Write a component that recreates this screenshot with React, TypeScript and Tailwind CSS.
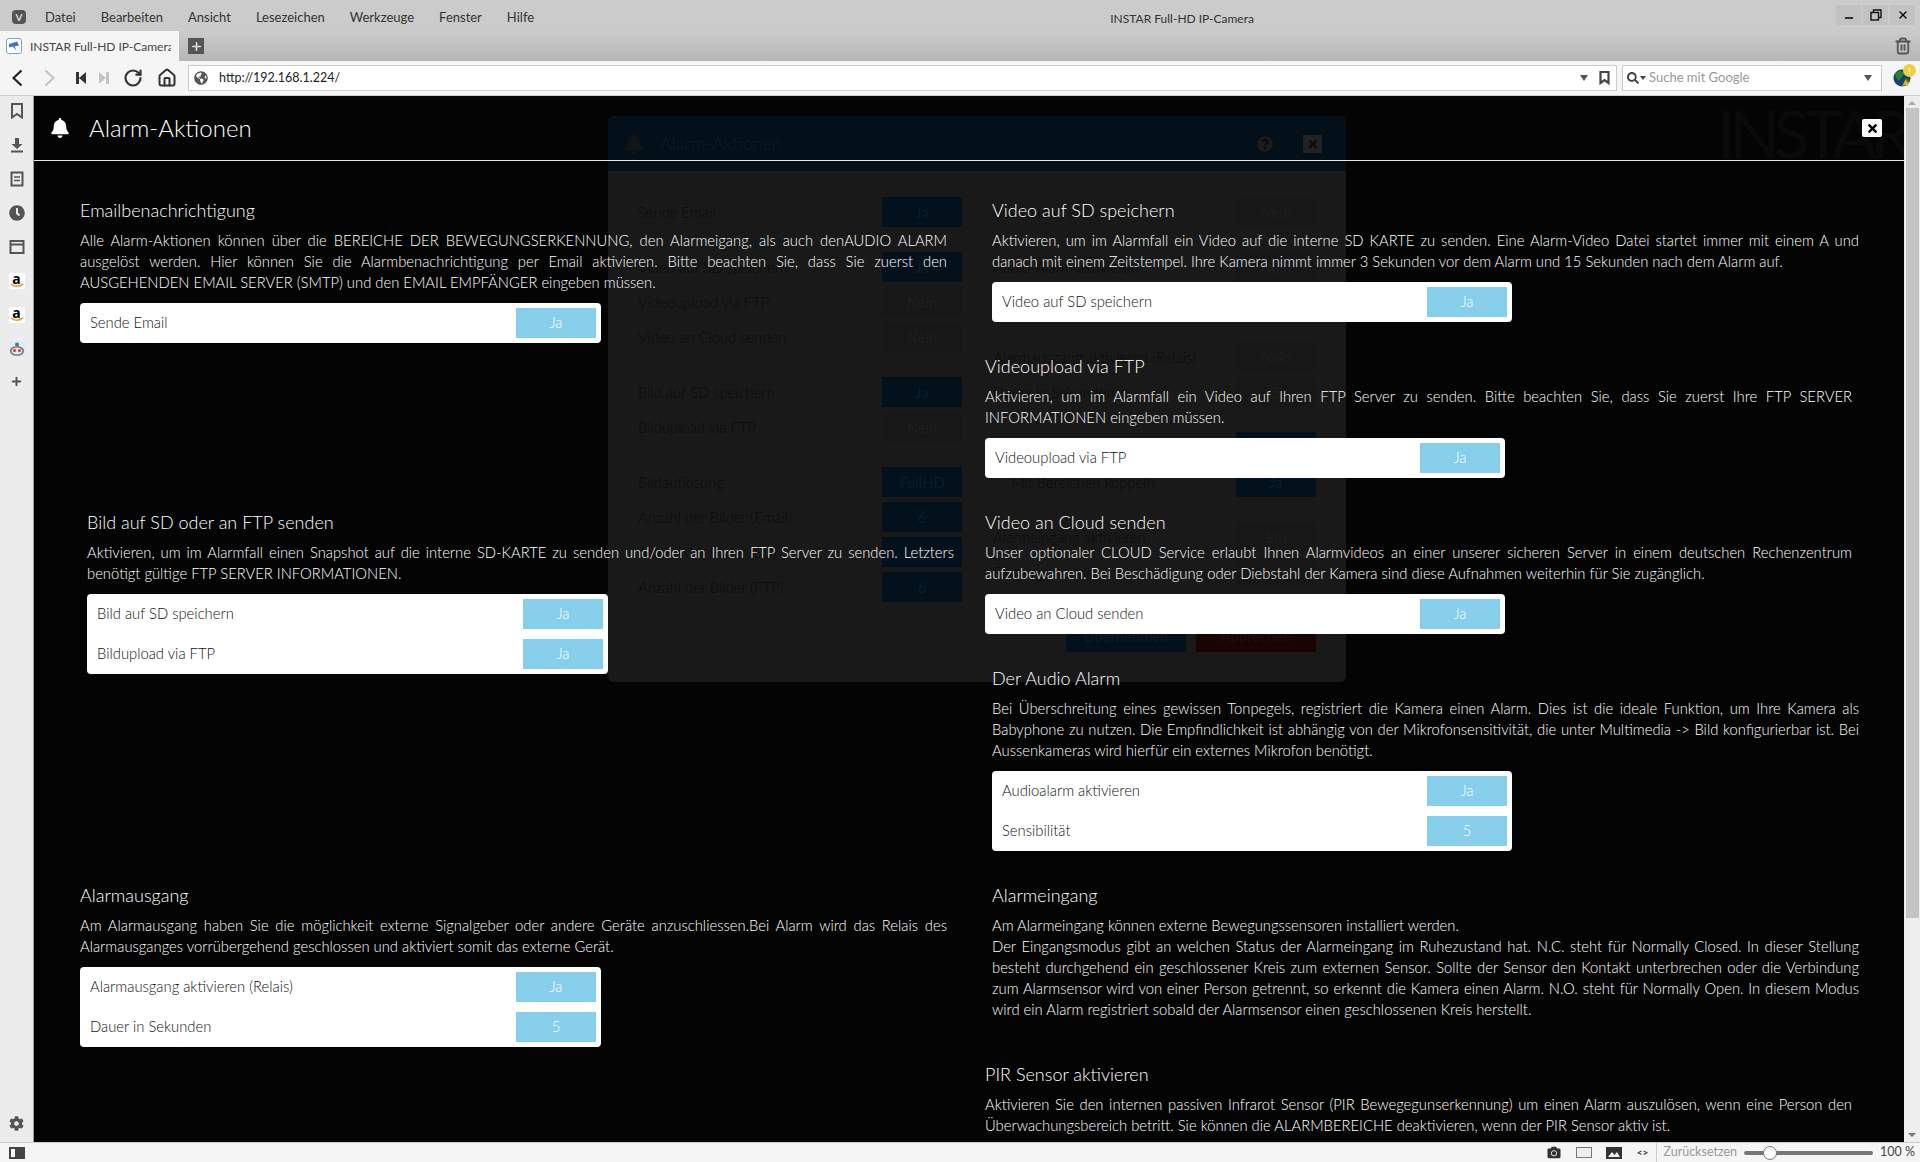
import React from "react";
import { Plus, RotateCw, Trash2, Minus, X, Home } from "lucide-react";
import { FaBell, FaCog, FaTimes, FaCamera, FaGlobeAmericas, FaSearch, FaQuestionCircle, FaClock } from "react-icons/fa";

const ui = { fontFamily: '"Lato","Noto Sans",sans-serif' };
const lato = { fontFamily: 'Lato,"Open Sans",sans-serif' };

function Row({ label, value }: { label: string; value: string }) {
  return (
    <div className="flex h-[30px] items-center justify-between">
      <span className="pb-[2px] pl-[3px] text-[14.8px] text-[#111]">{label}</span>
      <span className="flex h-[30px] w-[80px] items-center justify-center bg-[#87ceeb] pb-[1px] text-[14.8px] text-white">{value}</span>
    </div>
  );
}

function Section({ title, text, rows, ml, mt, right }: { title: string; text: React.ReactNode; rows?: [string, string][]; ml: string; mt: string; right?: boolean }) {
  return (
    <section className={`w-[867px] ${ml} ${mt}`}>
      <h3 className="h-[30px] text-[18px] leading-[30px] font-light text-white">{title}</h3>
      <p className="mt-[5px] text-justify text-[14.8px] leading-[21px] font-light text-white">{text}</p>
      {rows && (
        <div className={`mt-[10px] flex flex-col gap-[10px] rounded-[4px] bg-white py-[5px] pr-[5px] pl-[7px] font-light ${right ? "w-[520px]" : "w-[521px]"}`}>
          {rows.map(([a, b]) => (
            <Row key={a} label={a} value={b} />
          ))}
        </div>
      )}
    </section>
  );
}

function DimRow({ label, value, blue, indent }: { label: string; value: string; blue?: boolean; indent?: boolean }) {
  return (
    <div className="flex h-[30px] items-center justify-between">
      <span className={`text-[14.8px] font-light text-[#0b0b0b] ${indent ? "pl-[18px]" : ""}`}>{label}</span>
      <span className={`flex h-[30px] w-[80px] items-center justify-center text-[14.8px] ${blue ? "bg-[#03111c] text-[#0a1d2c]" : "bg-[#171717] text-[#1e1e1e]"}`}>{value}</span>
    </div>
  );
}

function DimModal() {
  return (
    <div className="absolute top-[20px] left-[574px] flex h-[566px] w-[738px] flex-col overflow-hidden rounded-[6px] bg-[#191919]">
      <div className="flex h-[55px] items-center bg-[#03101a] pr-[24px] pl-[16px]">
        <FaBell className="h-[20px] w-[20px] text-[#141414]" />
        <span className="ml-[16px] text-[18px] font-light text-[#0c1d2a]">Alarm-Aktionen</span>
        <FaQuestionCircle className="ml-auto h-[16px] w-[16px] text-[#1c1c1c]" />
        <span className="ml-[30px] flex h-[18px] w-[19px] items-center justify-center bg-[#222]"><FaTimes className="h-[12px] w-[12px] text-[#0b0b0b]" /></span>
      </div>
      <div className="flex gap-[31px] px-[30px] pt-[26px]">
        <div className="flex w-[324px] flex-col gap-[5px]">
          <DimRow label="Sende Email" value="Ja" blue />
          <div className="h-[15px]" />
          <DimRow label="Video auf SD speichern" value="Ja" blue />
          <DimRow label="Videoupload via FTP" value="Nein" />
          <DimRow label="Video an Cloud senden" value="Nein" />
          <div className="h-[15px]" />
          <DimRow label="Bild auf SD speichern" value="Ja" blue />
          <DimRow label="Bildupload via FTP" value="Nein" />
          <div className="h-[15px]" />
          <DimRow label="Bildauflösung" value="FullHD" blue />
          <DimRow label="Anzahl der Bilder (Email)" value="6" blue />
          <DimRow label="Anzahl der Bilder (SD)" value="6" blue />
          <DimRow label="Anzahl der Bilder (FTP)" value="6" blue />
        </div>
        <div className="flex w-[323px] flex-col gap-[5px]">
          <DimRow label="Audioalarm aktivieren" value="Nein" />
          <div className="h-[15px]" />
          <DimRow label="Audio-Alarm aktivieren" value="Nein" />
          <DimRow label="Sensibilität" value="5" />
          <div className="h-[15px]" />
          <DimRow label="Alarmausgang aktivieren (Relais)" value="Nein" />
          <DimRow label="Dauer in Sekunden" value="5" />
          <div className="h-[15px]" />
          <DimRow label="PIR Sensor aktivieren" value="Ja" blue />
          <DimRow label="Mit Bereichen koppeln" value="Ja" blue indent />
          <div className="h-[15px]" />
          <DimRow label="Alarmeingang aktivieren" value="Ein" />
          <DimRow label="Eingangsmodus" value="N.C." />
          <div className="mt-[28px] flex justify-end gap-[10px]">
            <span className="flex h-[32px] w-[120px] items-center justify-center bg-[#03111c] text-[14.8px] text-[#0a1d2c]">Übernehmen</span>
            <span className="flex h-[32px] w-[120px] items-center justify-center bg-[#190303] text-[14.8px] text-[#2a0a0a]">Abbrechen</span>
          </div>
        </div>
      </div>
    </div>
  );
}

function Chevron({ dir, color, className }: { dir: "l" | "r"; color: string; className: string }) {
  return (
    <svg className={className} width="12" height="18" viewBox="0 0 12 18" fill="none" stroke={color} strokeWidth="2.2">
      <path d={dir === "l" ? "M10.5 1.5L2.5 9l8 7.5" : "M1.5 1.5L9.5 9l-8 7.5"} />
    </svg>
  );
}

function Globe() {
  return (
    <div className="relative ml-[11px] h-[18px] w-[18px]">
      <svg width="18" height="18" viewBox="0 0 18 18">
        <circle cx="9" cy="9" r="8.5" fill="#17406a" />
        <path d="M3 4c3-3 7-2 8 0s-2 3-3 5-3 3-4 1-3-4-1-6zM12 10c2-1 4 0 4 2s-3 4-4 3-1-4 0-5z" fill="#2f7d3b" />
        <path d="M9 17l4-7 1 3 4 1-4 1 1 3-3-2z" fill="#e0b030" />
      </svg>
      <span className="absolute -top-[5px] -right-[5px] flex h-[13px] w-[13px] items-center justify-center rounded-full bg-[#f0d040] text-[8px] font-bold text-white">!</span>
    </div>
  );
}

function BrowserTop() {
  return (
    <header style={ui} className="h-[96px] shrink-0 text-[13px] text-[#333]">
      <div className="h-[61px] bg-gradient-to-b from-[#cbcbcb] from-50% to-[#b6b6b6]">
        <div className="flex h-[31px] items-center pt-[3px]">
          <span className="ml-[12px] flex h-[14px] w-[14px] items-center justify-center rounded-[4px] bg-[#555] text-[10px] font-bold text-[#ddd]">V</span>
          <nav className="ml-[19px] flex gap-[25px] pt-[2px]">
            {["Datei", "Bearbeiten", "Ansicht", "Lesezeichen", "Werkzeuge", "Fenster", "Hilfe"].map((m) => (
              <span key={m}>{m}</span>
            ))}
          </nav>
          <span className="ml-[528px] w-[240px] pt-[3px] text-center text-[12px]">INSTAR Full-HD IP-Camera</span>
          <div className="mt-[2px] ml-auto flex gap-[2px] self-start pr-[5px]">
            <span className="flex h-[20px] w-[25px] items-center justify-center bg-[#c2c2c2]"><Minus className="h-[12px] w-[12px] translate-y-[3px] text-black" strokeWidth={3} /></span>
            <span className="flex h-[20px] w-[25px] items-center justify-center bg-[#c2c2c2]">
              <svg width="12" height="12" viewBox="0 0 12 12" fill="none" stroke="#111" strokeWidth="1.4"><rect x="1" y="3.5" width="7.5" height="7.5" /><path d="M3.5 3V1H11V8.5H9" /></svg>
            </span>
            <span className="flex h-[20px] w-[25px] items-center justify-center bg-[#c2c2c2]"><X className="h-[12px] w-[12px] text-black" strokeWidth={2.6} /></span>
          </div>
        </div>
        <div className="flex h-[30px] items-stretch">
          <div className="flex w-[179px] items-center gap-[8px] bg-[#f5f5f5] pl-[6px] text-[12px] whitespace-nowrap">
            <span className="flex h-[16px] w-[16px] shrink-0 items-center justify-center rounded-[3px] border border-[#7aa0d8] bg-white">
              <svg width="12" height="12" viewBox="0 0 12 12"><path d="M1 4l8-2.5 2 4-4.5 1 2 4-4-4-3.5 1z" fill="#3a78c8" /></svg>
            </span>
            <span className="w-[141px] overflow-hidden pt-[2px] text-[#444]">INSTAR Full-HD IP-Camera</span>
          </div>
          <div className="ml-[9px] flex items-center">
            <span className="flex h-[16px] w-[16px] items-center justify-center bg-[#555]"><Plus className="h-[13px] w-[13px] text-[#ddd]" strokeWidth={3} /></span>
          </div>
          <div className="ml-auto flex items-center pr-[8px]"><Trash2 className="h-[18px] w-[18px] text-[#555]" strokeWidth={2.4} /></div>
        </div>
      </div>
      <div className="flex h-[35px] items-center border-b border-[#ccc] bg-[#f5f5f5]">
        <Chevron dir="l" color="#222" className="ml-[11px]" />
        <Chevron dir="r" color="#c4c4c4" className="ml-[21px]" />
        <svg className="ml-[19px]" width="12" height="12" viewBox="0 0 12 12" fill="#333"><rect x="1" y="0" width="3" height="12" /><path d="M11 0v12L4 6z" /></svg>
        <svg className="ml-[11px]" width="12" height="12" viewBox="0 0 12 12" fill="#c4c4c4"><rect x="8" y="0" width="3" height="12" /><path d="M1 0v12l7-6z" /></svg>
        <RotateCw className="ml-[13px] h-[20px] w-[20px] text-[#333]" strokeWidth={2.6} />
        <Home className="ml-[14px] h-[20px] w-[20px] text-[#333]" strokeWidth={2.4} />
        <div className="ml-[11px] flex h-[26px] w-[1429px] items-center border border-[#ccc] bg-white pr-[6px] pl-[5px]">
          <FaGlobeAmericas className="h-[14px] w-[14px] text-[#555]" />
          <span className="ml-[11px] text-[12.5px] text-[#222]">http://192.168.1.224/</span>
          <span className="ml-auto h-0 w-0 border-x-[4px] border-t-[6px] border-x-transparent border-t-[#555]" />
          <svg className="ml-[11px]" width="11" height="14" viewBox="0 0 11 14" fill="none" stroke="#444" strokeWidth="2.2"><path d="M1.5 1h8v11L5.5 9l-4 3z" /></svg>
        </div>
        <div className="ml-[5px] flex h-[26px] w-[260px] items-center border border-[#ccc] bg-white pr-[9px] pl-[4px]">
          <FaSearch className="h-[12px] w-[12px] text-[#444]" />
          <span className="ml-[1px] h-0 w-0 border-x-[3px] border-t-[4px] border-x-transparent border-t-[#444]" />
          <span className="ml-[3px] text-[13px] text-[#999]">Suche mit Google</span>
          <span className="ml-auto h-0 w-0 border-x-[4px] border-t-[6px] border-x-transparent border-t-[#555]" />
        </div>
        <Globe />
      </div>
    </header>
  );
}

function AmazonIcon() {
  return (
    <span className="relative flex h-[16px] w-[16px] justify-center rounded-[2px] bg-white text-[14px] leading-[12px] font-bold text-black">
      a
      <svg className="absolute bottom-[0px] left-[1px]" width="14" height="6" viewBox="0 0 14 6" fill="none" stroke="#f09a1c" strokeWidth="1.6"><path d="M1 1c3 3 8 3 12 0" /></svg>
    </span>
  );
}

function RedditIcon() {
  return (
    <svg width="16" height="16" viewBox="0 0 16 16">
      <rect width="16" height="16" fill="#dcebf7" />
      <ellipse cx="8" cy="10" rx="7" ry="4.8" fill="#6b6b6b" />
      <circle cx="8" cy="3.5" r="2" fill="#6b6b6b" />
      <ellipse cx="8" cy="10" rx="5.5" ry="3.6" fill="#e6e6e6" />
      <circle cx="5.5" cy="9.5" r="1.5" fill="#e03030" />
      <circle cx="10.5" cy="9.5" r="1.5" fill="#e03030" />
    </svg>
  );
}

function Sidebar() {
  return (
    <aside className="flex w-[34px] shrink-0 flex-col items-center border-r border-[#999] bg-[#ececec] pt-[7px]">
      <div className="flex flex-col items-center gap-[18px]">
        <svg width="16" height="16" viewBox="0 0 16 16" fill="none" stroke="#555" strokeWidth="2"><path d="M3 1h10v13.5L8 11l-5 3.5z" /></svg>
        <svg width="16" height="16" viewBox="0 0 16 16" fill="#555"><path d="M6 1h4v6h3.5L8 12 2.5 7H6z" /><rect x="2" y="13.5" width="12" height="2" /></svg>
        <svg width="16" height="16" viewBox="0 0 16 16" fill="none" stroke="#555" strokeWidth="2"><rect x="2.5" y="1.5" width="11" height="13" /><path d="M5 6h6M5 9.5h6" strokeWidth="1.6" /></svg>
        <FaClock className="h-[16px] w-[16px] text-[#555]" />
        <svg width="16" height="16" viewBox="0 0 16 16" fill="none" stroke="#555" strokeWidth="2"><rect x="1.5" y="2" width="13" height="12" /><path d="M1.5 5.5h13" /></svg>
        <AmazonIcon />
        <AmazonIcon />
        <RedditIcon />
        <Plus className="h-[13px] w-[13px] text-[#555]" strokeWidth={3.5} />
      </div>
      <FaCog className="mt-auto mb-[11px] h-[15px] w-[15px] text-[#555]" />
    </aside>
  );
}

function Scrollbar() {
  return (
    <div className="flex w-[16px] shrink-0 flex-col items-center bg-[#eeeeee]">
      <span className="mt-[5px] h-0 w-0 border-x-[4px] border-b-[4px] border-x-transparent border-b-[#aaa]" />
      <div className="mt-[3px] h-[810px] w-[13px] bg-[#c4c4c4]" />
      <span className="mt-auto mb-[5px] h-0 w-0 border-x-[4px] border-t-[4px] border-x-transparent border-t-[#777]" />
    </div>
  );
}

function Overlay() {
  return (
    <div style={lato} className="relative min-w-0 flex-1 overflow-hidden bg-[#040404]">
      <span className="absolute top-[4px] right-[-2px] text-[66px] leading-none font-normal tracking-[-6px] text-[#0a0a0a]">INSTAR</span>
      <DimModal />
      <div className="relative z-10 h-full">
        <div className="flex h-[65px] items-center border-b border-[#e6e6e6] pr-[22px]">
          <FaBell className="ml-[16px] h-[20px] w-[20px] text-white" />
          <h2 className="ml-[19px] text-[24px] font-light text-white">Alarm-Aktionen</h2>
          <span className="ml-auto flex h-[18px] w-[20px] items-center justify-center rounded-[2px] bg-white"><FaTimes className="h-[13px] w-[13px] text-black" /></span>
        </div>
        <div className="flex">
          <div className="flex w-[924px] shrink-0 flex-col">
            <Section
              ml="ml-[46px]"
              mt="mt-[34px]"
              title="Emailbenachrichtigung"
              text="Alle Alarm-Aktionen können über die BEREICHE DER BEWEGUNGSERKENNUNG, den Alarmeigang, als auch denAUDIO ALARM ausgelöst werden. Hier können Sie die Alarmbenachrichtigung per Email aktivieren. Bitte beachten Sie, dass Sie zuerst den AUSGEHENDEN EMAIL SERVER (SMTP) und den EMAIL EMPFÄNGER eingeben müssen."
              rows={[["Sende Email", "Ja"]]}
            />
            <Section
              ml="ml-[53px]"
              mt="mt-[164px]"
              title="Bild auf SD oder an FTP senden"
              text="Aktivieren, um im Alarmfall einen Snapshot auf die interne SD-KARTE zu senden und/oder an Ihren FTP Server zu senden. Letzters benötigt gültige FTP SERVER INFORMATIONEN."
              rows={[["Bild auf SD speichern", "Ja"], ["Bildupload via FTP", "Ja"]]}
            />
            <Section
              ml="ml-[46px]"
              mt="mt-[206px]"
              title="Alarmausgang"
              text="Am Alarmausgang haben Sie die möglichkeit externe Signalgeber oder andere Geräte anzuschliessen.Bei Alarm wird das Relais des Alarmausganges vorrübergehend geschlossen und aktiviert somit das externe Gerät."
              rows={[["Alarmausgang aktivieren (Relais)", "Ja"], ["Dauer in Sekunden", "5"]]}
            />
          </div>
          <div className="flex min-w-0 flex-1 flex-col">
            <Section
              right
              ml="ml-[34px]"
              mt="mt-[34px]"
              title="Video auf SD speichern"
              text="Aktivieren, um im Alarmfall ein Video auf die interne SD KARTE zu senden. Eine Alarm-Video Datei startet immer mit einem A und danach mit einem Zeitstempel. Ihre Kamera nimmt immer 3 Sekunden vor dem Alarm und 15 Sekunden nach dem Alarm auf."
              rows={[["Video auf SD speichern", "Ja"]]}
            />
            <Section
              right
              ml="ml-[27px]"
              mt="mt-[29px]"
              title="Videoupload via FTP"
              text="Aktivieren, um im Alarmfall ein Video auf Ihren FTP Server zu senden. Bitte beachten Sie, dass Sie zuerst Ihre FTP SERVER INFORMATIONEN eingeben müssen."
              rows={[["Videoupload via FTP", "Ja"]]}
            />
            <Section
              right
              ml="ml-[27px]"
              mt="mt-[29px]"
              title="Video an Cloud senden"
              text="Unser optionaler CLOUD Service erlaubt Ihnen Alarmvideos an einer unserer sicheren Server in einem deutschen Rechenzentrum aufzubewahren. Bei Beschädigung oder Diebstahl der Kamera sind diese Aufnahmen weiterhin für Sie zugänglich."
              rows={[["Video an Cloud senden", "Ja"]]}
            />
            <Section
              right
              ml="ml-[34px]"
              mt="mt-[29px]"
              title="Der Audio Alarm"
              text="Bei Überschreitung eines gewissen Tonpegels, registriert die Kamera einen Alarm. Dies ist die ideale Funktion, um Ihre Kamera als Babyphone zu nutzen. Die Empfindlichkeit ist abhängig von der Mikrofonsensitivität, die unter Multimedia -> Bild konfigurierbar ist. Bei Aussenkameras wird hierfür ein externes Mikrofon benötigt."
              rows={[["Audioalarm aktivieren", "Ja"], ["Sensibilität", "5"]]}
            />
            <Section
              ml="ml-[34px]"
              mt="mt-[29px]"
              title="Alarmeingang"
              text={<>Am Alarmeingang können externe Bewegungssensoren installiert werden.<br />Der Eingangsmodus gibt an welchen Status der Alarmeingang im Ruhezustand hat. N.C. steht für Normally Closed. In dieser Stellung besteht durchgehend ein geschlossener Kreis zum externen Sensor. Sollte der Sensor den Kontakt unterbrechen oder die Verbindung zum Alarmsensor wird von einer Person getrennt, so erkennt die Kamera einen Alarm. N.O. steht für Normally Open. In diesem Modus wird ein Alarm registriert sobald der Alarmsensor einen geschlossenen Kreis herstellt.</>}
            />
            <Section
              ml="ml-[27px]"
              mt="mt-[39px]"
              title="PIR Sensor aktivieren"
              text="Aktivieren Sie den internen passiven Infrarot Sensor (PIR Bewegegunserkennung) um einen Alarm auszulösen, wenn eine Person den Überwachungsbereich betritt. Sie können die ALARMBEREICHE deaktivieren, wenn der PIR Sensor aktiv ist."
            />
          </div>
        </div>
      </div>
    </div>
  );
}

function StatusBar() {
  return (
    <footer style={ui} className="flex h-[20px] shrink-0 items-center border-t border-[#ccc] bg-[#f5f5f5] text-[12.5px]">
      <span className="ml-[9px] flex h-[12px] w-[16px] bg-[#444] pl-[2px]"><span className="my-[2px] w-[4px] bg-white" /></span>
      <div className="ml-auto flex items-center pr-[5px]">
        <FaCamera className="h-[13px] w-[16px] text-[#333]" />
        <span className="ml-[14px] h-[11px] w-[16px] border border-[#777] bg-[#eee]" />
        <svg className="ml-[14px]" width="16" height="12" viewBox="0 0 16 12"><rect width="16" height="12" fill="#333" /><path d="M2 10l4-5 2.5 3L11 5l3 5z" fill="#eee" /></svg>
        <span className="ml-[15px] text-[10px] font-bold text-[#333]">&lt;&gt;</span>
        <span className="ml-[8px] h-[19px] border-l border-[#ccc]" />
        <span className="ml-[6px] text-[#999]">Zurücksetzen</span>
        <div className="relative ml-[7px] h-[4px] w-[129px] rounded-full bg-[#777]">
          <span className="absolute top-[-5px] left-[19px] h-[14px] w-[14px] rounded-full border border-[#777] bg-white" />
        </div>
        <span className="ml-[7px] text-[#444]">100 %</span>
      </div>
    </footer>
  );
}

export default function App() {
  return (
    <div className="flex h-[1162px] w-[1920px] flex-col overflow-hidden bg-[#f5f5f5]">
      <BrowserTop />
      <div className="flex min-h-0 flex-1">
        <Sidebar />
        <Overlay />
        <Scrollbar />
      </div>
      <StatusBar />
    </div>
  );
}
